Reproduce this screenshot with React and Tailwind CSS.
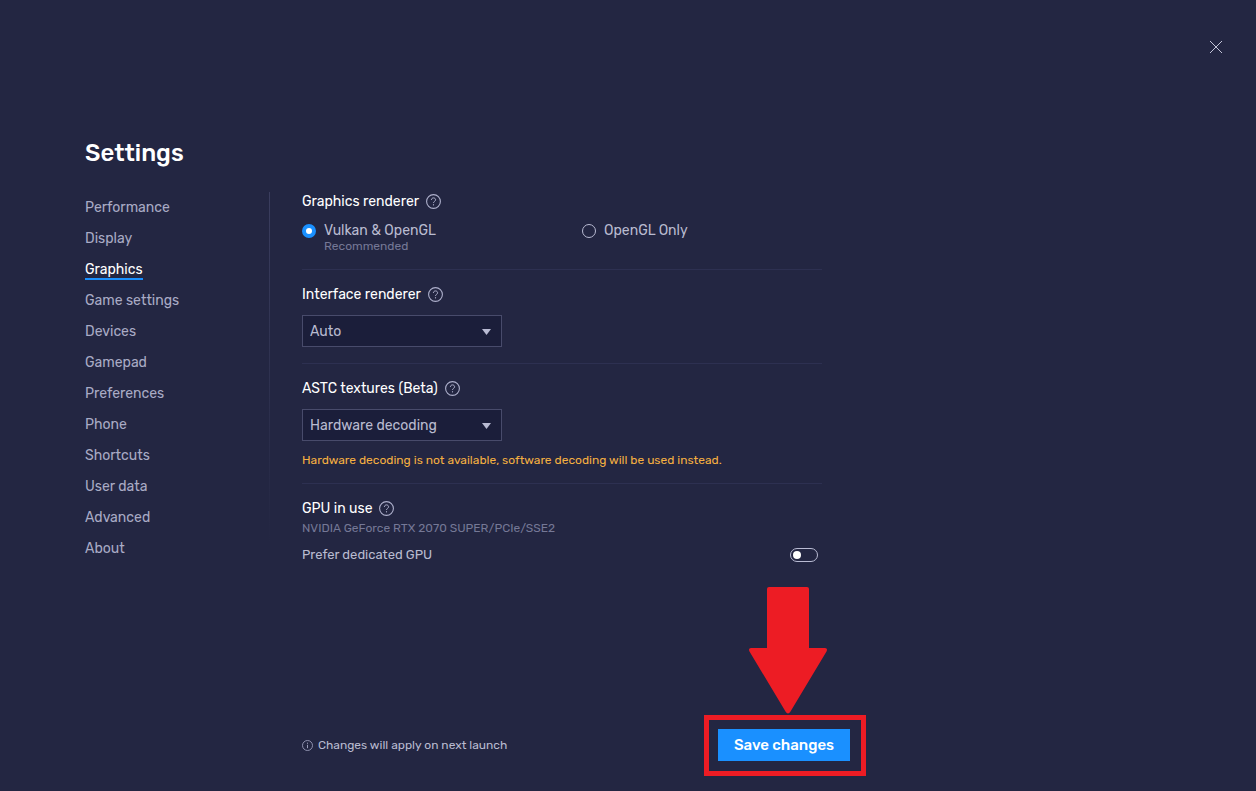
import { useState } from 'react';

const NAV_ITEMS = [
    'Performance',
    'Display',
    'Graphics',
    'Game settings',
    'Devices',
    'Gamepad',
    'Preferences',
    'Phone',
    'Shortcuts',
    'User data',
    'Advanced',
    'About',
];

function HelpIcon() {
    return (
        <svg className="w-[15px] h-[15px] text-[#aeb0cc]" viewBox="0 0 15 15" fill="none" stroke="currentColor">
            <circle cx="7.5" cy="7.5" r="6.9" strokeWidth="1.1" />
            <path d="M5.4 6c0-1.300.9-2.100 2.100-2.100s2.100.8 2.100 1.900c0 1.600-2.100 1.600-2.100 3.100" strokeWidth="1" />
            <path d="M7.5 10.200v1.200" strokeWidth="1.1" />
        </svg>
    );
}

function InfoIcon() {
    return (
        <svg className="w-[11px] h-[11px] text-[#9a9cb9]" viewBox="0 0 11 11" fill="none" stroke="currentColor">
            <circle cx="5.5" cy="5.5" r="5" strokeWidth="0.9" />
            <path d="M5.5 4.8v3.4M5.5 2.7v1.1" />
        </svg>
    );
}

function Heading({ children, help }) {
    return (
        <div className="flex items-center gap-[7px] h-[19px]">
            <h2 className="text-sm leading-[19px] text-white">{children}</h2>
            <button type="button" aria-label={help}>
                <HelpIcon />
            </button>
        </div>
    );
}

function Section({ children, last }) {
    return (
        <section className={last ? 'pt-[15px]' : 'pt-[15px] pb-4 border-b border-[#2d3051] first:pt-0'}>
            {children}
        </section>
    );
}

function Select({ label, options }) {
    return (
        <div className="relative w-[200px] mt-[11px]">
            <select
                aria-label={label}
                className="appearance-none w-full h-8 pt-[2px] pl-[7px] pr-8 text-sm bg-[#1b1e3a] border border-[#484b6b] text-[#b9bbd0] outline-none"
            >
                {options.map((option) => (
                    <option key={option}>{option}</option>
                ))}
            </select>
            <svg className="absolute right-[11px] top-[14px] w-[9px] h-[6px] pointer-events-none" viewBox="0 0 9 6">
                <path d="M0 0h9L4.5 6z" fill="#b9bbd3" />
            </svg>
        </div>
    );
}

function Radio({ label, note, checked, onChange }) {
    return (
        <label className="flex items-start gap-2">
            <input
                type="radio"
                name="renderer"
                checked={checked}
                onChange={onChange}
                className="appearance-none w-[14px] h-[14px] mt-[2px] shrink-0 rounded-full border border-[#b9bbd3] checked:border-4 checked:border-[#1a90ff] checked:bg-white"
            />
            <span className="pt-px">
                <span className="block text-sm leading-4 text-[#b9bbd0]">{label}</span>
                {note && <span className="block text-xs leading-[15px] text-[#757896]">{note}</span>}
            </span>
        </label>
    );
}

function SaveHighlight() {
    return (
        <>
            <div className="absolute -top-[14px] -left-[14px] -right-4 -bottom-[15px] border-5 border-[#ed1c24] pointer-events-none" />
            <svg
                className="absolute left-[31px] bottom-[47px] w-[79px] h-[127px] pointer-events-none"
                viewBox="0 0 79 127"
                fill="#ed1c24"
            >
                <path d="M20 0h38q2 0 2 2v59h16q3 0 1.500 3.500L41.500 124.500q-2.500 4-5 0L.5 64.500Q-1 61 2 61h16V2q0-2 2-2z" />
            </svg>
        </>
    );
}

export default function App() {
    const [renderer, setRenderer] = useState('vulkan');

    return (
        <div className="min-h-screen flex flex-col bg-[#232642] text-[#b9bbd0] font-['Rubik','Inter',sans-serif]">
            <header className="flex justify-end pt-10 pr-[33px]">
                <button type="button" aria-label="Close">
                    <svg className="w-[14px] h-[14px]" viewBox="0 0 14 14" stroke="#c3c4d8" fill="none">
                        <path d="M1 1l12 12M13 1L1 13" />
                    </svg>
                </button>
            </header>

            <main className="pl-[85px] pt-[83px]">
                <h1 className="text-2xl leading-8 font-medium text-white">Settings</h1>

                <div className="flex mt-[23px]">
                    <nav className="flex flex-col items-start gap-3 w-[184px] shrink-0 pt-[7px]">
                        {NAV_ITEMS.map((item) => (
                            <a
                                key={item}
                                href="#"
                                aria-current={item === 'Graphics' ? 'page' : undefined}
                                className={
                                    item === 'Graphics'
                                        ? 'text-sm leading-[17px] text-white border-b-2 border-[#1a90ff]'
                                        : 'text-sm leading-[17px] text-[#a9abc5] border-b-2 border-transparent'
                                }
                            >
                                {item}
                            </a>
                        ))}
                    </nav>

                    <div className="w-px h-[352px] shrink-0 bg-gradient-to-b from-[#3a3d5e] to-[#232642]" />

                    <div className="flex-1 max-w-[552px] pl-8">
                        <Section>
                            <Heading help="About graphics renderer">Graphics renderer</Heading>
                            <div className="grid grid-cols-[280px_1fr] h-[31px] mt-[11px]">
                                <Radio
                                    label="Vulkan & OpenGL"
                                    note="Recommended"
                                    checked={renderer === 'vulkan'}
                                    onChange={() => setRenderer('vulkan')}
                                />
                                <Radio
                                    label="OpenGL Only"
                                    checked={renderer === 'opengl'}
                                    onChange={() => setRenderer('opengl')}
                                />
                            </div>
                        </Section>

                        <Section>
                            <Heading help="About interface renderer">Interface renderer</Heading>
                            <Select label="Interface renderer" options={['Auto', 'DirectX', 'OpenGL']} />
                        </Section>

                        <Section>
                            <Heading help="About ASTC textures">ASTC textures (Beta)</Heading>
                            <Select
                                label="ASTC textures (Beta)"
                                options={['Hardware decoding', 'Software decoding', 'Disabled']}
                            />
                            <p className="mt-3 text-xs leading-[14px] text-[#f5b041]">
                                Hardware decoding is not available, software decoding will be used instead.
                            </p>
                        </Section>

                        <Section last>
                            <Heading help="About GPU in use">GPU in use</Heading>
                            <p className="mt-[2px] text-xs leading-4 text-[#757896]">
                                NVIDIA GeForce RTX 2070 SUPER/PCIe/SSE2
                            </p>
                            <label className="flex items-center justify-between mt-[11px] pr-1 text-[13px] leading-4">
                                Prefer dedicated GPU
                                <input
                                    type="checkbox"
                                    role="switch"
                                    className="appearance-none flex items-center w-7 h-[14px] px-[2px] rounded-full border border-[#b9bbd3] before:block before:w-2 before:h-2 before:rounded-full before:bg-white checked:justify-end"
                                />
                            </label>
                        </Section>
                    </div>
                </div>
            </main>

            <footer className="mt-auto pt-6 pl-[302px] pb-[30px]">
                <div className="flex items-center justify-between max-w-[548px]">
                    <p className="flex items-center gap-[5px] text-xs leading-4">
                        <InfoIcon />
                        Changes will apply on next launch
                    </p>
                    <div className="relative">
                        <button
                            type="button"
                            className="w-[132px] h-8 bg-[#1a90ff] text-[15px] leading-5 font-medium text-white whitespace-nowrap"
                        >
                            Save changes
                        </button>
                        <SaveHighlight />
                    </div>
                </div>
            </footer>
        </div>
    );
}
